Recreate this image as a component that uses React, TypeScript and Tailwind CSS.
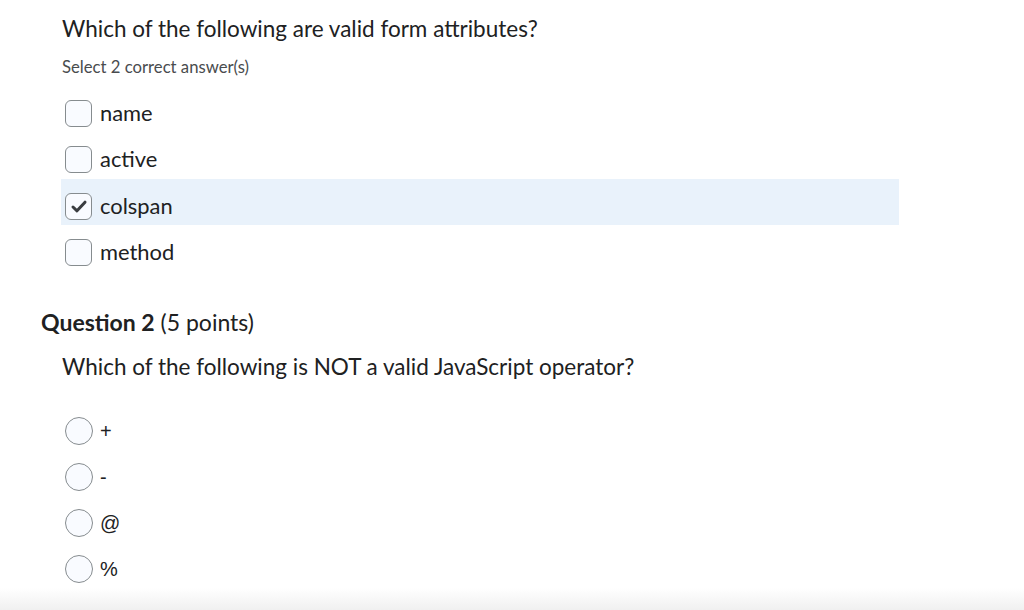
import React from "react";

const font = { fontFamily: "Lato, 'Noto Sans', sans-serif" };

function Checkbox({ checked }: { checked?: boolean }) {
  return (
    <span className="flex h-[27px] w-[27px] shrink-0 items-center justify-center rounded-[6px] border border-[#868c8f] bg-[#f9fbff]">
      {checked && (
        <svg width="18" height="15" viewBox="0 0 18 15">
          <path d="M3 8 L7 11.8 L15 3.2" fill="none" stroke="#3a3d40" strokeWidth="3" strokeLinecap="round" strokeLinejoin="round" />
        </svg>
      )}
    </span>
  );
}

function Radio() {
  return <span className="block h-[28px] w-[28px] shrink-0 rounded-full border border-[#868c8f] bg-[#f9fbff]" />;
}

export default function App() {
  const checks = [
    { label: "name", checked: false },
    { label: "active", checked: false },
    { label: "colspan", checked: true },
    { label: "method", checked: false },
  ];
  const radios = ["+", "-", "@", "%"];
  return (
    <div className="relative h-[610px] w-[1024px] overflow-hidden bg-white text-[#202122]" style={font}>
      <div className="pl-[41px]">
        <div className="pl-[21px] pt-[14px]">
          <div className="text-[22.5px] leading-[30px]">Which of the following are valid form attributes?</div>
          <div className="mt-[12px] text-[16.7px] leading-[22px] text-[#494c4e]">Select 2 correct answer(s)</div>
        </div>
        <div className="ml-[20px] mt-[8px] w-[838px]">
          {checks.map((c) => (
            <div
              key={c.label}
              className={`flex h-[46.4px] items-start gap-[8px] pl-[4px] pt-[14px] ${c.checked ? "bg-[#e9f2fb]" : ""}`}
            >
              <Checkbox checked={c.checked} />
              <span className="text-[21.9px] leading-[26px]">{c.label}</span>
            </div>
          ))}
        </div>
        <div className="mt-[35px] text-[23px] leading-[30px]">
          <span className="font-bold">Question 2</span> (5 points)
        </div>
        <div className="mt-[15px] pl-[21px] text-[22.5px] leading-[30px]">
          Which of the following is NOT a valid JavaScript operator?
        </div>
        <div className="ml-[24px] mt-[27px]">
          {radios.map((r) => (
            <div key={r} className="flex h-[45.8px] items-center gap-[7px]">
              <Radio />
              <span className="text-[20px] leading-[24px] text-[#202122]" style={{ fontFamily: "'Liberation Sans', Arial, sans-serif" }}>
                {r}
              </span>
            </div>
          ))}
        </div>
      </div>
      <div className="pointer-events-none absolute bottom-0 left-0 h-[22px] w-full bg-gradient-to-b from-[#ffffff00] to-[#f0f0f0]" />
    </div>
  );
}
